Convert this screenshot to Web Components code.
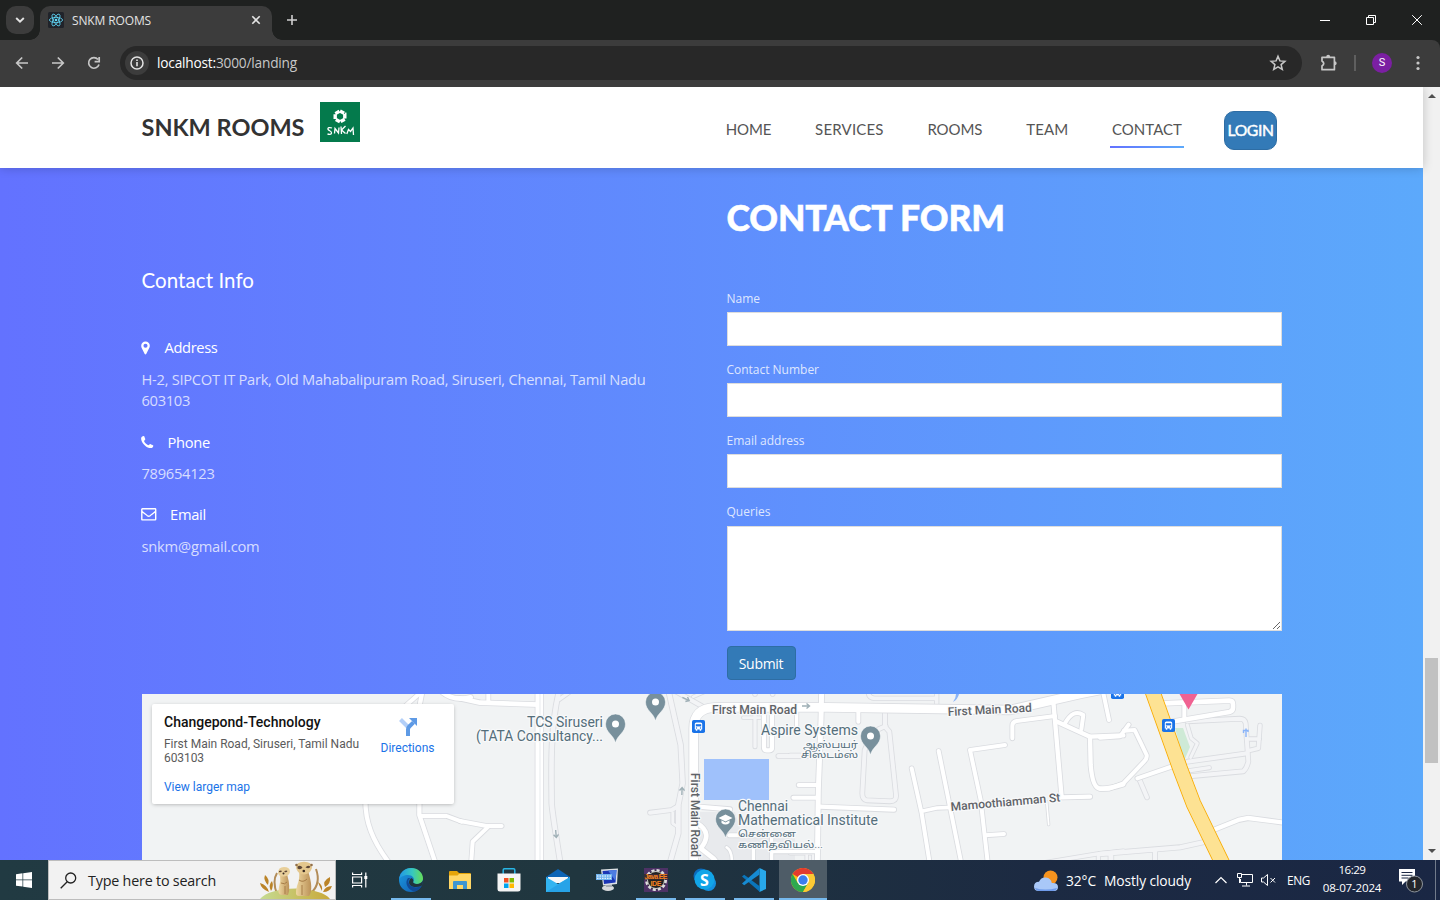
<!DOCTYPE html>
<html lang="en">
<head>
<meta charset="utf-8">
<title>SNKM ROOMS</title>
<style>
html,body{margin:0;height:900px;overflow:hidden}
body{width:1440px;display:flex;flex-direction:column;font-family:"Open Sans","Noto Sans",sans-serif}
</style>
</head>
<body>
<browser-chrome></browser-chrome>
<page-view></page-view>
<win-taskbar></win-taskbar>
<script>
const define=(name,html,after)=>{
  const t=document.createElement('template');t.innerHTML=html;
  customElements.define(name,class extends HTMLElement{
    constructor(){super();this.attachShadow({mode:'open'}).append(t.content.cloneNode(true));}
    connectedCallback(){if(after)after.call(this,this.shadowRoot);}
  });
};

/* one line of text, tracked so that it takes exactly w pixels */
define('fit-text',`<style>:host{display:inline-block;white-space:pre;flex:none}</style><slot></slot>`,function(){
  const w=+this.getAttribute('w');
  this.style.letterSpacing='0px';
  const r=document.createRange();r.selectNodeContents(this);
  const n=r.getBoundingClientRect().width;
  if(w&&n)this.style.letterSpacing=((w-n)/this.textContent.length).toFixed(3)+'px';
});

define('browser-chrome',`<style>
:host{display:block;height:87px;background:#3c3c3c;color:#e3e3e3}
svg{display:block;flex:none}
.tabs{height:40px;background:#1f2120;display:flex;align-items:flex-end}
.menu{width:28px;height:28px;border-radius:10px;background:#3c3c3c;margin:0 6px 6px 6px;display:grid;place-items:center}
.tab{position:relative;width:232px;height:34px;background:#3c3c3c;border-radius:10px 10px 0 0;display:flex;align-items:center;box-sizing:border-box;padding:0 8px;font-size:12px;margin-bottom:0}
.tab:before,.tab:after{content:"";position:absolute;bottom:0;width:10px;height:10px}
.tab:before{left:-10px;background:radial-gradient(circle at 0 0,#0000 9.5px,#3c3c3c 10px)}
.tab:after{right:-10px;background:radial-gradient(circle at 100% 0,#0000 9.5px,#3c3c3c 10px)}
.tab fit-text{margin-left:8px;margin-top:-6px}
.tab svg{margin-top:-6px}
.x{margin-left:auto;margin-right:3px}
.plus{margin:0 0 14px 14px}
.win{margin-left:auto;display:flex;align-items:center;height:40px}
.bar{height:47px;display:flex;align-items:center;box-sizing:border-box;padding:0 15px 1px 14px;border-radius:0 8px 0 0;background:#3c3c3c}
.wrap{background:#1f2120}
.bar .n{margin-right:20px}
.omni{flex:1;height:34px;border-radius:17px;background:#282828;display:flex;align-items:center;padding:0 15px 0 5px;font-size:13.700px;color:#c7c7c7}
.omni fit-text{margin-top:-1px}
.info{width:24px;height:24px;border-radius:12px;background:#3c3c3c;display:grid;place-items:center;margin-right:8px}
b{font-weight:400;color:#fff}
.star{margin-left:auto}
.me{width:20px;height:20px;border-radius:50%;background:#7b1fa2;color:#fff;font:11px/20px Roboto,sans-serif;text-align:center;margin:0 24px 0 16px}
</style>
<div class="tabs">
<div class="menu"><svg width="10" height="8" viewBox="0 0 10 8"><path d="M1.2 2 5 5.7 8.8 2" fill="none" stroke="#e3e3e3" stroke-width="1.9"/></svg></div>
<div class="tab"><svg width="16" height="16" viewBox="0 0 16 16"><rect width="16" height="16" rx="1.5" fill="#20232a"/><g fill="none" stroke="#61dafb" stroke-width=".8"><ellipse cx="8" cy="8" rx="6.6" ry="2.6"/><ellipse cx="8" cy="8" rx="6.6" ry="2.6" transform="rotate(60 8 8)"/><ellipse cx="8" cy="8" rx="6.6" ry="2.6" transform="rotate(120 8 8)"/></g><circle cx="8" cy="8" r="1.3" fill="#61dafb"/></svg>
<fit-text w="79">SNKM ROOMS</fit-text>
<svg class="x" width="10" height="10" viewBox="0 0 10 10"><path d="M1.3 1.3 8.7 8.7M8.7 1.3 1.3 8.7" stroke="#e3e3e3" stroke-width="1.6"/></svg></div>
<svg class="plus" width="12" height="12" viewBox="0 0 12 12"><path d="M6 1v10M1 6h10" stroke="#d0d0d0" stroke-width="1.6"/></svg>
<div class="win">
<svg width="138" height="40" viewBox="0 0 138 40" fill="none" stroke="#fff"><path d="M18 20.5h10M64.500 17.500h7v7h-7zM66.500 17.500v-2h7v7h-2M110.200 15.200l9.600 9.600M119.800 15.200l-9.600 9.600"/></svg></div>
</div>
<div class="wrap"><div class="bar">
<svg class="n" width="16" height="16" viewBox="0 0 16 16" fill="none" stroke="#c7c7c7" stroke-width="1.7"><path d="M14 8H3M8.200 2.500 2.700 8l5.500 5.500"/></svg>
<svg class="n" width="16" height="16" viewBox="0 0 16 16" fill="none" stroke="#c7c7c7" stroke-width="1.700"><path d="M2 8h11M7.800 2.500 13.300 8l-5.500 5.500"/></svg>
<svg class="n" style="margin-right:18px" width="16" height="16" viewBox="0 0 16 16" fill="none" stroke="#c7c7c7" stroke-width="1.700"><path d="M13 9.500A5.300 5.300 0 1 1 12 4.500M13.200 2v4.600H8.600"/></svg>
<div class="omni"><div class="info"><svg width="14" height="14" viewBox="0 0 14 14"><circle cx="7" cy="7" r="6" fill="none" stroke="#e3e3e3" stroke-width="1.500"/><path d="M7 6v4.200M7 3.600v1.500" stroke="#e3e3e3" stroke-width="1.600"/></svg></div>
<fit-text w="140"><b>localhost:</b>3000/landing</fit-text>
<svg class="star" width="18" height="18" viewBox="0 0 18 18"><path d="m9 2.200 1.900 4.700 5 .4-3.800 3.300 1.200 4.900L9 12.900l-4.300 2.600 1.200-4.900-3.800-3.300 5-.4z" fill="none" stroke="#c7c7c7" stroke-width="1.500"/></svg></div>
<svg style="margin-left:18px" width="18" height="18" viewBox="0 0 18 18"><path d="M2 3.300h12.400v12.400H2V12q3.500-2.500 0-5z" fill="none" stroke="#c7c7c7" stroke-width="1.700" stroke-linejoin="round"/><path d="M6.200 3a2 2.200 0 0 1 4 0zM14.500 7.300a2.200 2 0 0 1 0 4z" fill="#c7c7c7"/></svg>
<svg style="margin-left:16px" width="2" height="16"><path d="M1 0v16" stroke="#5f5f5f" stroke-width="2"/></svg>
<div class="me">S</div>
<svg style="margin-right:5px" width="4" height="16" viewBox="0 0 4 16" fill="#c7c7c7"><circle cx="2" cy="2.500" r="1.600"/><circle cx="2" cy="8" r="1.600"/><circle cx="2" cy="13.500" r="1.600"/></svg>
</div></div>`);

define('site-nav',`<style>
:host{display:flex;height:81px;background:#fff;box-shadow:0 0 10px rgba(0,0,0,.2);box-sizing:border-box;padding:0 146px 0 141.500px;position:relative;z-index:1;font-family:Lato,sans-serif}
h1{margin:24px 0 0;font-size:23.500px;line-height:32px;font-weight:700;color:#333}
.logo{margin:15px 0 0 15.500px}
nav{margin-left:auto;display:flex;font-size:15px;color:#555;padding-top:24px}
a{margin-right:39.800px;padding:8px 2px 0;height:29px;line-height:20px}
a.on{margin-right:40px;background:linear-gradient(to right,#6372ff,#5ca9fb) 0 100%/100% 2px no-repeat}
button{width:53px;height:39px;box-sizing:border-box;background:#337ab7;border:1px solid #2e6da4;border-radius:10px;padding:0 0 1px;color:#fff;font:400 15.700px/36px Lato,sans-serif;-webkit-text-stroke:.45px #fff;text-align:center}
</style>
<h1><fit-text w="163">SNKM ROOMS</fit-text></h1>
<svg class="logo" width="40" height="40" viewBox="0 0 40 40"><rect width="40" height="40" fill="#047a4c"/><g fill="none" stroke="#fff"><path d="M20 9l4.800 2.700v5.400l-4.800 2.700-4.800-2.700v-5.400z" stroke-width="3.400" stroke-dasharray="4.700 .8"/><path d="M12 26c-2-.8-4.500-.5-4 1.200.5 1.800 4 1.500 3.500 4-.3 1.500-2.500 1.500-4 .7M14.500 31.500l.5-5 3.500 4.500.5-5.500M21 24.500l.5 7.500M25.500 24l-4 4 4 3.500M26.800 32l1.700-4.500 2 2 2.500-3.500.5 7" stroke-width="1.300"/></g></svg>
<nav><a><fit-text w="45.500">HOME</fit-text></a><a><fit-text w="68.500">SERVICES</fit-text></a><a><fit-text w="55">ROOMS</fit-text></a><a><fit-text w="42">TEAM</fit-text></a><a class="on"><fit-text w="70">CONTACT</fit-text></a><button><fit-text w="46">LOGIN</fit-text></button></nav>`);

define('info-item',`<style>
:host{display:block;font-size:14.700px;line-height:21px;color:rgba(255,255,255,.75)}
.h{display:flex;align-items:center;color:#fff;height:21px;margin-bottom:var(--gap,11px)}
::slotted(svg){display:block;flex:none;margin-left:-.5px}
.t{display:flex;flex-direction:column;align-items:flex-start}
</style><div class="h"><slot name="icon"></slot><slot name="title"></slot></div><div class="t"><slot></slot></div>`);

define('contact-info',`<style>
:host{display:block;width:555px;padding-top:99px}
h3{margin:0 0 44px;font:400 20.500px/26px Lato,sans-serif;color:#fff}
info-item{margin-bottom:21px}
</style>
<h3><fit-text w="112.500">Contact Info</fit-text></h3>
<info-item style="margin-bottom:20.500px"><svg slot="icon" style="margin-right:14.500px" width="9" height="14" viewBox="0 0 9 14"><path fill="#fff" fill-rule="evenodd" d="M4.500.5A4.200 4.200 0 0 0 .2 4.700c0 1 .2 1.600.5 2.200l3 6.200c.3.600 1.200.6 1.500 0l3-6.200c.4-.700.600-1.300.6-2.200A4.200 4.200 0 0 0 4.500.5zm0 2.200a2 2 0 1 1 0 4.100 2 2 0 0 1 0-4.100z"/></svg><fit-text slot="title" w="53">Address</fit-text><fit-text w="504">H-2, SIPCOT IT Park, Old Mahabalipuram Road, Siruseri, Chennai, Tamil Nadu</fit-text><fit-text w="48.500">603103</fit-text></info-item>
<info-item style="--gap:10.500px;margin-bottom:20px"><svg slot="icon" style="margin-right:14px" width="12.500" height="12.500" viewBox="0 0 12 12"><path fill="#fff" d="M11.800 9.200c.2.900-.7 2.400-2 2.500C5.500 12 .2 6.800.1 2.400.1 1.300 1.300.2 2.600.1c.5 0 .6.400 1.500 2.800.2.700-1.200 1.300-1.200 1.900.3 1.200 2.700 3.700 4.100 4.100.6 0 1.300-1.300 1.900-1.200 2.100 1 2.900 1.300 2.900 1.500z"/></svg><fit-text slot="title" w="42.500">Phone</fit-text><fit-text w="73">789654123</fit-text></info-item>
<info-item><svg slot="icon" style="margin-right:13.500px" width="15.500" height="13" viewBox="0 0 15.500 13"><path d="M1.400.8h12.700q.6 0 .6.600v9.900q0 .6-.6.6H1.400q-.6 0-.6-.6V1.400q0-.6.6-.6zM.8 3.300c1.800 1.800 4.500 3.400 5.600 4.400q1.300 1 2.700 0c1.100-1 3.800-2.600 5.600-4.400" fill="none" stroke="#fff" stroke-width="1.400"/></svg><fit-text slot="title" w="36">Email</fit-text><fit-text w="118">snkm@gmail.com</fit-text></info-item>`);

define('form-field',`<style>
:host{display:block;margin-bottom:15px;color:rgba(255,255,255,.8);font-size:12px;line-height:16px}
label{display:block;height:20px;padding-top:1px;margin-bottom:1px}
input,textarea{display:block;width:100%;height:34px;box-sizing:border-box;border:1px solid #ddd;background:#fff;margin:0;border-radius:0}
textarea{height:105px;resize:vertical}
:host([area]) label{margin-bottom:2px}
</style><label><slot></slot></label>`,function(root){
  root.append(document.createElement(this.hasAttribute('area')?'textarea':'input'));
});

define('contact-form',`<style>
:host{display:block;width:555px;padding-top:25px}
h2{margin:0 0 47px;color:#fff;font:900 35.500px/50px Lato,sans-serif;height:50px;-webkit-text-stroke:.5px #fff}
button{display:block;width:69px;height:34px;border:1px solid #2e6da4;background:#337ab7;border-radius:4px;color:#fff;font:500 14px/31px "Open Sans",sans-serif;padding:0}
</style>
<h2><fit-text w="278.500">CONTACT FORM</fit-text></h2>
<form-field><fit-text w="33.500">Name</fit-text></form-field>
<form-field><fit-text w="92.500">Contact Number</fit-text></form-field>
<form-field><fit-text w="78">Email address</fit-text></form-field>
<form-field area><fit-text w="44">Queries</fit-text></form-field>
<button><fit-text w="44.500">Submit</fit-text></button>`);

/* roads: [path, width, kind]; each group has its own origin, in thirds of a pixel */
const W='#fff',O='#f3f4f6';
const tiles=[
 [140,690,[
  ['M848 0L840 40L838 375L890 530',13,W],['M796 48L848 2',12,W],['M905 5Q940 35 992 22',14,W],
  ['M676 330C676 395 695 450 752 525',13,W],['M840 378H920L965 395',12,W]]],
 [460,690,[
  ['M298 0C268 120 275 250 275 340Q277 370 302 525',14,O],['M298 28L335 2',10,O],
  ['M625 0L662 165L668 280L655 345L655 430L628 525',14,O],['M570 368L635 360L655 348',12,O],['M638 368V400L655 412',8,O],
  ['M640 0L725 48',12,O],['M700 20L735 5',8,O],['M885 12V0M938 12V0',12,O],
  ['M0 25L60 38L238 44',14,W],['M85 5V35',12,W],['M238 0V525',23,W],
  ['M0 393L80 408H125',12,W],['M85 410L38 455L33 525',12,W],
  ['M885 65V170',10,O],['M912 60V172Q912 181 920 181H928Q936 181 936 172V60',13,W],['M850 83H900',8,O],
  ['M955 198H1085',12,O],['M1016 285H1072',12,W],['M1000 323H1072',12,W],
  ['M715 350L810 358',13,W],['M712 400Q760 430 722 475L760 505L780 530',14,W],['M808 436H935',12,W],['M880 470V525M935 440V525M935 485H1070',10,W],['M800 472Q815 480 816 515',8,W]]],
 [790,690,[
  ['M235 5Q235 25 255 25H440V0M440 25V50',11,O],
  ['M285 65V110L298 125L318 315Q320 334 300 334L230 331Q216 328 217 308L224 180L250 125L287 108',12,O],
  ['M720 525L920 492L1000 483M925 525V500M965 525V498',10,O],['M0 195H85',9,O],['M50 485V525M70 485V525M0 490H75',8,O],
  ['M95 0L93 90L85 300L82 525',15,W],['M20 65V110',10,W],['M205 60V95',12,W],['M90 350L312 359',13,W],
  ['M365 235L395 370L420 525',12,W],['M395 364L440 354L485 352',11,W],['M446 183L515 525',12,W],
  ['M645 165L540 180L572 330L594 525',12,W],['M585 436L642 432',12,W],['M667 145V107Q667 95 680 93L795 78',12,W],
  ['M790 35L815 322L900 320',13,W],['M798 94L900 140L1000 136',13,W],['M900 140L902 225Q908 296 930 295Q952 298 1000 283',13,W],
  ['M825 100Q850 55 880 75L874 118',12,W],['M938 0L957 90',12,W],['M770 335L776 404',5,W]]],
 [1100,640,[
  ['M118 418L141 472',12,O],['M262 244L420 236Q434 236 437 250L445 365Q440 385 430 394L268 409',12,O],['M262 365L442 340',12,O],['M262 393L328 383',10,O],
  ['M480 256L475 325L445 332M448 297H478',11,O],['M0 642L240 622L318 605M165 632V665M32 643V665',13,O],['M262 255L274 295L292 310L272 352',9,O],
  ['M0 293L60 289L86 254',12,W],['M72 272L104 270L140 345Q142 355 132 365L70 430L28 446L0 447',12,W],['M220 378L112 415',12,W],
  ['M188 190L388 182Q399 182 399 193V203Q399 213 388 216L210 246',14,W],['M253 188V238',12,W],['M340 570L415 540L445 534L552 548',13,W]]],
 [460,690,[['M701 525V115Q701 55 765 52H1100L1650 60L1860 12L2000 -16',26,W]]]
];
const at=(o,s)=>`<g transform="translate(${o[0]} ${o[1]}) scale(.33333)">${s}</g>`;
const seg=(d,w,c)=>`<path d="${d}" fill="none" stroke="${c}" stroke-width="${w}" stroke-linecap="round" stroke-linejoin="round"/>`;
const layer=(kind,cas)=>tiles.map(t=>at(t,t[2].filter(r=>r[2]===kind).map(r=>cas?seg(r[0],r[1]+(5),'#dadce0'):seg(r[0],r[1],r[2])).join(''))).join('');
const pin=(x,y,inner)=>`<g transform="translate(${x} ${y})"><path d="M0 19C-1.600 11-10 8.500-10 0A10 10 0 0 1 10 0C10 8.500 1.600 11 0 19z" fill="#78909c" stroke="#fff" stroke-width=".5"/>${inner||'<circle r="3.500" fill="#fff"/>'}</g>`;
const bus=(x,y)=>`<g transform="translate(${x} ${y})"><rect x="-6.500" y="-6.500" width="13" height="13" rx="1.800" fill="#1a73e8"/><path d="M-3.700-2.500q0-1.500 1.500-1.500h4.400q1.500 0 1.500 1.500v5.500h-1v1.300h-1.500V3h-2.400v1.300h-1.500V3h-1z" fill="#fff"/><path d="M-2.700-2.300h5.400v2.200h-5.400z" fill="#1a73e8"/><circle cx="-2" cy="1.500" r=".7" fill="#1a73e8"/><circle cx="2" cy="1.500" r=".7" fill="#1a73e8"/></g>`;
const txt=(x,y,s,len,o='')=>`<text x="${x}" y="${y}" ${len?`textLength="${len}" lengthAdjust="spacingAndGlyphs"`:''} ${o}>${s}</text>`;
const arrow=(x,y,a)=>`<path transform="translate(${x} ${y}) rotate(${a})" d="M-4 0H3M0.500-2.500L3.500 0L.5 2.500" fill="none" stroke="#9fb0b6" stroke-width="1.400"/>`;

define('map-canvas',`<style>:host{display:block;width:1140px;height:166px}svg{display:block}text{font-family:Roboto,"Noto Sans Tamil",sans-serif;paint-order:stroke;stroke:#f8f9fa;stroke-width:2.500px;stroke-linejoin:round}</style>
<svg width="1140" height="166" viewBox="142 694 1140 166"><rect x="142" y="694" width="1140" height="166" fill="#f1f3f4"/>
<path d="M700 812H735L742 836L795 834V860H700z" fill="#e8eaed"/><path d="M1175 728l8 0 7 19-6 14z" fill="#ceead6"/>
${layer(O,1)}${layer(O,0)}${layer(W,1)}${layer(W,0)}
<path d="M540 694V860" stroke="#eceef1" stroke-width="1.200"/>
${at([1100,640],seg('M156 150L240 385L280 490L372 680',47,'#f9ab00')+seg('M156 150L240 385L280 490L372 680',42,'#fde293'))}
<path d="M704 759h65v41h-65z" fill="#9fc1fb"/><path d="M956 694q0 4-3 8q5-3 6-8z" fill="#8ab4f8"/>
<path d="M1179.500 694h18l-9 15.500z" fill="#f06292"/>
<path d="M1246 728.500V737M1243.500 733v-2.500h4.500v1.500" fill="none" stroke="#8ab4f8" stroke-width="1.400"/>
${arrow(686,699,25)}${arrow(806,706,0)}${arrow(556,834,85)}${arrow(682,791,-88)}
${pin(615.500,724)}${pin(655.500,702)}${pin(870.500,736)}${pin(725.500,819,'<path d="M0-4.500 7-1 0 2.500-7-1z" fill="#fff"/><path d="M-4 1.300V4Q0 7 4 4V1.300L0 3.500zM6.200-1V3.500" fill="#fff"/>')}
${bus(698.500,726.500)}${bus(1168.500,725.500)}${bus(1117.500,692.500)}
<g font-size="14" fill="#546e7a">
${txt(527,727,'TCS Siruseri',76)}${txt(476,741,'(TATA Consultancy...',127)}
${txt(761,735,'Aspire Systems',97)}${txt(803,747.500,'ஆஸ்பயர்',55,'font-size="9.500"')}${txt(801,758,'சிஸ்டம்ஸ்',57,'font-size="9.500"')}
${txt(738,811,'Chennai',50)}${txt(738,825,'Mathematical Institute',140)}${txt(738,836.500,'சென்னை',58,'font-size="9.500"')}${txt(738,847.500,'கணிதவியல்...',85,'font-size="9.500"')}
</g>
<g font-size="12" fill="#5f6368" stroke-width="2" font-weight="500">
${txt(712,714,'First Main Road',85)}
${txt(948,716,'First Main Road',84,'transform="rotate(-3 948 716)"')}
${txt(951,811,'Mamoothiamman St',110,'transform="rotate(-5 951 811)"')}
${txt(691,773,'First Main Road',84,'transform="rotate(90 691 773)"')}
</g></svg>`);

define('map-card',`<style>
:host{display:flex;justify-content:space-between;box-sizing:border-box;width:302px;height:100px;background:#fff;border-radius:2px;box-shadow:0 1px 4px -1px rgba(0,0,0,.35);padding:9px 19.500px 0 12px;font:12px/14px Roboto,sans-serif;color:#5b5b5b}
.t{font-size:14px;line-height:18px;font-weight:500;color:#111;margin-bottom:6px}
.a{color:#1a73e8}.v{margin-top:15px}
.d{display:flex;flex-direction:column;align-items:center;padding-top:4px}
svg{display:block;margin-bottom:4px}div fit-text{display:block}
</style>
<div><div class="t"><fit-text w="156.500">Changepond-Technology</fit-text></div><fit-text w="195">First Main Road, Siruseri, Tamil Nadu</fit-text><fit-text w="40">603103</fit-text><div class="a v"><fit-text w="86">View larger map</fit-text></div></div>
<div class="d a"><svg width="20" height="20" viewBox="0 0 20 20"><path d="M2.500 2.500l8 8" stroke="#b3cff8" stroke-width="4"/><path d="M10 19v-6.500q0-1.700 1.300-3L15.500 5.300" fill="none" stroke="#5e9ae5" stroke-width="4"/><path d="M11 1h8v8z" fill="#5e9ae5"/></svg><fit-text w="54">Directions</fit-text></div>`);

define('map-embed',`<style>:host{display:block;position:relative;width:1140px;height:166px;overflow:hidden}map-card{position:absolute;left:10px;top:10px}</style><map-canvas></map-canvas><map-card></map-card>`);

define('page-view',`<style>
:host{display:grid;grid-template-columns:1423px 17px;height:773px;overflow:hidden}
section{height:692px;background:linear-gradient(to right,#6372ff 0%,#5ca9fb 100%)}
.cols{display:flex;justify-content:space-between;width:1140px;margin-left:141.500px;height:526px}
map-embed{margin-left:142px}
.sb{background:#f1f1f1;display:flex;flex-direction:column;align-items:center;justify-content:space-between;padding:7px 0 7px;box-sizing:border-box}
.sb svg{display:block}.thumb{width:13px;height:105px;background:#c1c1c1;margin-top:556px;margin-bottom:83px}
</style>
<div><site-nav></site-nav><section><div class="cols"><contact-info></contact-info><contact-form></contact-form></div><map-embed></map-embed></section></div>
<div class="sb"><svg width="8" height="4"><path d="M4 0l4 4H0z" fill="#505050"/></svg><div class="thumb"></div><svg width="8" height="4"><path d="M4 4L0 0h8z" fill="#505050"/></svg></div>`);

define('task-app',`<style>
:host{display:grid;place-items:center;width:48px;height:40px;margin-right:1px;flex:none}
:host([open]){background:linear-gradient(#76b9ed,#76b9ed) 50% 100%/40px 2px no-repeat}
:host([active]){background:linear-gradient(#76b9ed,#76b9ed) 50% 100%/48px 2px no-repeat,#4e5c67}
::slotted(svg){display:block}
</style><slot></slot>`);

define('win-taskbar',`<style>
:host{display:flex;height:40px;align-items:center;background:linear-gradient(to right,#213a42,#20363f 40%,#1c2a42 72%,#1a2744);color:#fff;font-size:13.800px}
svg{display:block;flex:none}
.start{width:48px;display:grid;place-items:center}
.search{position:relative;width:288px;height:40px;box-sizing:border-box;border:1px solid #bdbdbd;background:#f2f2f2;display:flex;align-items:center;color:#222;padding-left:11px;font-size:14.300px}
.search fit-text{margin-left:11px}
.search .art{margin-left:auto}
.view{width:51px}.view svg{margin-left:15px}
.tray{margin-left:auto;display:flex;align-items:center}
.clock{width:60px;margin:-2px 16px 0 12px;display:flex;flex-direction:column;align-items:center;font-size:11.600px;line-height:18px}
.end{width:1px;height:40px;background:#717b8b;margin:0 4px 0 12px}
</style>
<div class="start"><svg width="16" height="16" viewBox="0 0 16 16" fill="#fff"><path d="M0 2.200 6.500 1.300v6.200H0zM7.200 1.200 16 0v7.500H7.200zM0 8.300h6.500v6.300L0 13.700zM7.200 8.300H16V16l-8.800-1.300z"/></svg></div>
<div class="search"><svg width="17" height="17" viewBox="0 0 17 17" fill="none" stroke="#222" stroke-width="1.300"><circle cx="10.700" cy="6" r="5"/><path d="M7.200 9.700.7 16.200"/></svg><fit-text w="128">Type here to search</fit-text>
<svg class="art" width="76" height="38" viewBox="0 0 76 38"><defs><linearGradient id="h"><stop offset="0" stop-color="#c5db92"/><stop offset="1" stop-color="#c9a93a"/></linearGradient><linearGradient id="f"><stop offset="0" stop-color="#eed7a0"/><stop offset="1" stop-color="#bb9157"/></linearGradient></defs>
<path d="M18 33Q13 20 18 12M53 31Q62 22 57 8" stroke="#b28c58" stroke-width="2" fill="none"/>
<path d="M1 38Q10 28 37 27.500Q64 29 71 38z" fill="url(#h)"/>
<path d="M10 31Q8 24 1 22Q2 28 10 31zM9 24Q4 19 6 14Q11 18 9 24zM12 30Q9 24 13 20Q15 25 12 30zM63 30Q60 24 59 21Q64 24 63 30zM66 26Q63 20 71 16Q72 23 66 26zM64 31Q66 25 73 25Q71 31 64 31z" fill="#bb8428"/>
<path d="M21 13Q22 20 20 26Q18 34 23 34H29Q32 27 28 13z" fill="url(#f)"/><path d="M19 12Q19 6 25 6Q31 6 31 11Q30 15 25 15.500Q20 16 19 12z" fill="#e8cf9a"/>
<path d="M40 10Q41 18 38 25Q35 35 40 35H50Q55 28 49 10z" fill="url(#f)"/><path d="M37 7Q37 .8 45 .8Q53 .8 53 7Q51 13 45 13.500Q39 13 37 7z" fill="#e4c78d"/>
<path d="M38.500 5.500q3-2 5 1-2 3-5 1zM46.500 6.500q2-3 5-1-1 3-5 1zM20 10q2-1 3 0-1 2-3 1zM25.500 10q2-1 3 0-1 2-3 1z" fill="#5e4736"/><circle cx="44.800" cy="10" r="1.300" fill="#3a2b22"/><circle cx="24.500" cy="12.500" r="1" fill="#3a2b22"/><circle cx="37.500" cy="4" r="1.300" fill="#92704a"/><circle cx="52.500" cy="4" r="1.300" fill="#92704a"/>
<path d="M40 19q4 3 8-1M22 22q4 2 6-1M43 34V24M26 33V25" stroke="#a67c47" stroke-width="1" fill="none"/></svg></div>
<div class="view"><svg width="17" height="16" viewBox="0 0 17 16" fill="none" stroke="#fff" stroke-width="1.200"><path d="M1.600.5v2h9v-2M1.600 5h9v6h-9zM1.600 15.500v-2h9v2M14.800.5v15"/><path d="M13.300 4h3v3h-3z" fill="#fff" stroke="none"/></svg></div>
<task-app open><svg width="24" height="24" viewBox="0 0 24 24"><defs><linearGradient id="e1"><stop offset="0" stop-color="#2196e8"/><stop offset=".55" stop-color="#36c7c0"/><stop offset="1" stop-color="#66dd56"/></linearGradient><linearGradient id="e2" x2="1" y2="1"><stop offset="0" stop-color="#1b9de2"/><stop offset="1" stop-color="#1258ae"/></linearGradient></defs><circle cx="12" cy="12" r="12" fill="url(#e2)"/><path d="M.1 11C1 4.500 6 0 12.200 0 19 0 24 5 24 10.500c0 3.500-3 5.500-6 5.500-3.500 0-4.500-1.500-3.500-3C16 10 13 7 9 7 5 7 1.500 9 .1 11z" fill="url(#e1)"/><path d="M9 10C5 15 9 22 15.500 23.500 19 23 21.500 20.500 22.800 18 17 21 9.500 19 9.500 13.500 9.500 12 10 11 11.500 10z" fill="#114a96"/><path d="M14.500 13c-1 1.500 0 3 3.500 3 2.500 0 5-1.500 5.800-3.500.5 3-1 5-1.500 5.500C16 20.500 10 18.500 10 14q0-3 2.500-4 2 1 2 3z" fill="#20343d"/></svg></task-app>
<task-app><svg width="22" height="18" viewBox="0 0 22 18"><path d="M0 1q0-1 1-1h7l2 2h11q1 0 1 1v15H0z" fill="#e5a50a"/><path d="M0 4.500h8.500L10 3h12v15H0z" fill="#ffd767"/><path d="M4 18v-7q0-1 1-1h12q1 0 1 1v7h-4v-4H8v4z" fill="#3f96d2"/></svg></task-app>
<task-app><svg width="24" height="24" viewBox="0 0 24 24"><path d="M6.200 7V2q0-1.200 1.200-1.200h9.200q1.200 0 1.200 1.200v5" fill="none" stroke="#28b6e6" stroke-width="1.500"/><path d="M.5 5.500h23V21q0 2.500-2.500 2.500H3Q.5 23.500.5 21z" fill="#f5f5f5"/><path d="M7 10h4.500v4.500H7z" fill="#f25022"/><path d="M12.500 10H17v4.500h-4.500z" fill="#7fba00"/><path d="M7 15.500h4.500V20H7z" fill="#00a4ef"/><path d="M12.500 15.500H17V20h-4.500z" fill="#ffb900"/></svg></task-app>
<task-app><svg width="24" height="23" viewBox="0 0 24 23"><path d="M0 8 12 0l12 8v3H0z" fill="#0d64b5"/><path d="M2 8h20v6H2z" fill="#f7f7f7"/><path d="M0 8l12 7 12-7v15H0z" fill="#32b4f1"/><path d="M0 23 24 8v15z" fill="#27a3e8"/></svg></task-app>
<task-app><svg width="24" height="24" viewBox="0 0 24 24"><ellipse cx="13" cy="20" rx="6" ry="3" fill="#d8dadc"/><path d="M11 15h6v4h-6z" fill="#a8adb2"/><path d="M6 1.500 23 .5 22 16 8 17.500z" fill="#dde1e4"/><path d="M7.500 3 21.500 2 20.500 14.500 9 16z" fill="#1c36b5"/><path d="M13 2.600l8.500-.6-1 11z" fill="#4d7de2"/><rect x="1" y="6" width="16" height="6" fill="#72b5ef"/><path d="M2 8h14M2 10.300h14" stroke="#fff" stroke-dasharray="1.500 1"/></svg></task-app>
<task-app open><svg width="24" height="24" viewBox="0 0 24 24"><rect width="24" height="24" fill="#4d3266"/><circle cx="12" cy="12" r="9.500" fill="#232323" stroke="#ddd" stroke-width="3" stroke-dasharray="3 2"/><circle cx="12" cy="12" r="8.500" fill="#222" stroke="#ccc"/><rect x="0" y="6" width="24" height="5.500" fill="#392a35"/><g font-family="Liberation Sans,sans-serif" font-size="7" font-weight="700" fill="#f58220"><text x=".5" y="11" textLength="23">Java EE</text><text x="6.500" y="17.500" textLength="11">IDE</text></g></svg></task-app>
<task-app open><svg width="24" height="24" viewBox="0 0 24 24"><circle cx="8" cy="8" r="7.500" fill="#0b6bbd"/><circle cx="15.500" cy="15.500" r="7.500" fill="#1490df"/><circle cx="11.500" cy="11.500" r="10" fill="#12a5e8"/><text x="11.500" y="17.500" text-anchor="middle" font-family="Open Sans,sans-serif" font-weight="700" font-size="16" fill="#fff">S</text></svg></task-app>
<task-app open><svg width="24" height="24" viewBox="0 0 24 24"><path d="M17.500 0 24 3v18l-6.500 3z" fill="#28a8ea"/><path d="M0 8.500 2.200 6.800 18 18.500V24z" fill="#0a75bb"/><path d="M0 15.500 17.500 0v6.500L2.200 17.200z" fill="#168bd3"/></svg></task-app>
<task-app active><svg width="24" height="24" viewBox="0 0 24 24"><circle cx="12" cy="12" r="12" fill="#fbc116"/><path d="M12 12 1.600 6A12 12 0 0 1 22.400 6z" fill="#e33b2e"/><path d="M1.600 6A12 12 0 0 0 12 24L17.200 15 6.800 15z" fill="#2da94f"/><path d="M12 6h10.400A12 12 0 0 1 12 24l5.200-9z" fill="#fcc934"/><circle cx="12" cy="12" r="6" fill="#fff"/><circle cx="12" cy="12" r="4.700" fill="#3b7ded"/></svg></task-app>
<div class="tray">
<svg style="margin:2px 8px 0 0" width="24" height="22" viewBox="0 0 24 22"><circle cx="16.500" cy="7.500" r="7" fill="#f6931e"/><path d="M5 21q-5 0-5-4.500T5 11.800Q7 7 12 7.500q5 .5 5.800 5.500 6.200-.5 6.200 4T19 21z" fill="#a9c8f8"/><path d="M1 18q10 3 22 0-1 3-4 3H5q-3 0-4-3z" fill="#6f9bea"/></svg>
<fit-text w="30" style="margin-right:8px">32°C</fit-text><fit-text w="87" style="margin-right:24px">Mostly cloudy</fit-text>
<svg style="margin-right:10px" width="12" height="8" viewBox="0 0 12 8"><path d="M.5 7 6 1.500 11.500 7" fill="none" stroke="#fff" stroke-width="1.200"/></svg>
<svg style="margin-right:7px" width="17" height="14" viewBox="0 0 17 14" fill="none" stroke="#fff"><path d="M5 1.500h10.500v8H3.500V6M9.500 9.500v3M5 13h8M.5.5h4v4h-4zM2.500 5v5"/></svg>
<svg style="margin-right:11px" width="15" height="12" viewBox="0 0 15 12" fill="none" stroke="#fff"><path d="M.5 4v4h2l4 3.500V.5L2.500 4zM9.500 4l4.500 4.500M14 4 9.500 8.500"/></svg>
<fit-text w="23" style="font-size:11.800px;margin-top:-1px">ENG</fit-text>
<div class="clock"><fit-text w="27">16:29</fit-text><fit-text w="58.500">08-07-2024</fit-text></div>
<svg width="25" height="25" viewBox="0 0 25 25"><path d="M1 1h16v12.500H7.500L4 17v-3.500H1z" fill="#fff"/><path d="M3.500 4.500h11M3.500 7.300h11M3.500 10h7" stroke="#1b2844"/><circle cx="16.500" cy="16" r="8" fill="#23262b" stroke="#8f959c"/><text x="16.500" y="20" text-anchor="middle" font-family="Open Sans,sans-serif" font-size="11" fill="#fff">1</text></svg>
<div class="end"></div>
</div>`);
</script>
</body>
</html>
